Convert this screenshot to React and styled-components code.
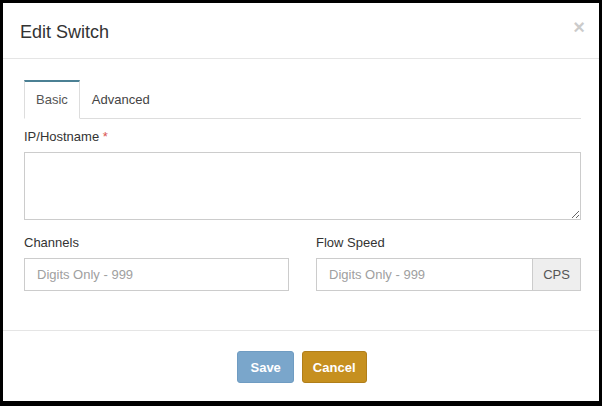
import React from "react"
import styled, { createGlobalStyle } from "styled-components"

const GlobalStyle = createGlobalStyle`
  html, body {
    margin: 0;
    background: #000;
  }
  body {
    padding: 3px 3px 5px 3px;
    font-family: "Liberation Sans", Arial, sans-serif;
    font-size: 13px;
    color: #333;
  }
`

const Modal = styled.div`
  width: 596px;
  height: 398px;
  background: #fff;
  display: flex;
  flex-direction: column;
`

const Header = styled.div`
  display: flex;
  justify-content: space-between;
  align-items: flex-start;
  height: 55px;
  padding: 0 14px 0 17px;
  border-bottom: 1px solid #e5e5e5;
`

const Title = styled.h4`
  margin: 0;
  padding-top: 17px;
  font-size: 18px;
  font-weight: normal;
  line-height: 25px;
  color: #333;
`

const Close = styled.button`
  border: 0;
  background: none;
  padding: 0;
  margin-top: 13px;
  font-family: "Liberation Sans", Arial, sans-serif;
  font-size: 20px;
  font-weight: bold;
  line-height: 22px;
  color: #000;
  opacity: 0.2;
  cursor: pointer;
`

const Body = styled.div`
  flex: 1;
  padding: 21px 18px 0 21px;
`

const Tabs = styled.ul`
  display: flex;
  margin: 0;
  padding: 0;
  list-style: none;
  border-bottom: 1px solid #ddd;
`

const Tab = styled.li`
  margin-bottom: -1px;
  padding: 9px 11px;
  line-height: 18px;
  color: ${p => (p.active ? "#555" : "#444")};
  background: ${p => (p.active ? "#fff" : "transparent")};
  border-top: 2px solid ${p => (p.active ? "#4b8094" : "transparent")};
  border-left: 1px solid ${p => (p.active ? "#ddd" : "transparent")};
  border-right: 1px solid ${p => (p.active ? "#ddd" : "transparent")};
  border-bottom: 1px solid ${p => (p.active ? "#fff" : "transparent")};
`

const Group = styled.div`
  margin-top: ${p => p.top || 0}px;
`

const Label = styled.label`
  display: block;
  line-height: 18px;
  margin-bottom: 6px;
  color: #333;
`

const Required = styled.span`
  color: #d9534f;
`

const TextArea = styled.textarea`
  display: block;
  box-sizing: border-box;
  width: 100%;
  height: 68px;
  margin: 0;
  border: 1px solid #ccc;
  border-radius: 0;
  padding: 6px 12px;
  font-family: inherit;
  font-size: 13px;
`

const Columns = styled.div`
  display: grid;
  grid-template-columns: 1fr 1fr;
  column-gap: 27px;
  margin-top: 14px;
`

const InputGroup = styled.div`
  display: flex;
`

const Input = styled.input`
  box-sizing: border-box;
  flex: 1;
  min-width: 0;
  height: 33px;
  margin: 0;
  padding: 0 12px;
  border: 1px solid #ccc;
  border-radius: 0;
  font-family: inherit;
  font-size: 13px;
  color: #555;
  &::placeholder {
    color: #a0a0a0;
  }
`

const Addon = styled.span`
  box-sizing: border-box;
  display: flex;
  align-items: center;
  justify-content: center;
  width: 48px;
  height: 33px;
  border: 1px solid #ccc;
  border-left: 0;
  background: #eee;
  color: #555;
`

const Footer = styled.div`
  display: flex;
  justify-content: center;
  gap: 8px;
  height: 50px;
  padding-top: 20px;
  padding-left: 2px;
  border-top: 1px solid #e5e5e5;
`

const Button = styled.button`
  height: 32px;
  padding: 0 ${p => p.pad}px;
  border: 1px solid ${p => p.border};
  border-radius: 3px;
  background: ${p => p.bg};
  color: #fff;
  font-family: "Liberation Sans", Arial, sans-serif;
  font-size: 13px;
  font-weight: bold;
  cursor: pointer;
`

const App = () => (
  <>
    <GlobalStyle />
    <Modal>
      <Header>
        <Title>Edit Switch</Title>
        <Close>×</Close>
      </Header>
      <Body>
        <Tabs>
          <Tab active>Basic</Tab>
          <Tab>Advanced</Tab>
        </Tabs>
        <Group top={9}>
          <Label>
            IP/Hostname <Required>*</Required>
          </Label>
          <TextArea />
        </Group>
        <Columns>
          <div>
            <Label>Channels</Label>
            <InputGroup>
              <Input placeholder="Digits Only - 999" />
            </InputGroup>
          </div>
          <div>
            <Label>Flow Speed</Label>
            <InputGroup>
              <Input placeholder="Digits Only - 999" />
              <Addon>CPS</Addon>
            </InputGroup>
          </div>
        </Columns>
      </Body>
      <Footer>
        <Button pad={12} bg="#7aa6cb" border="#6f9cc2">Save</Button>
        <Button pad={10} bg="#c6901f" border="#b07e1a">Cancel</Button>
      </Footer>
    </Modal>
  </>
)

export default App
